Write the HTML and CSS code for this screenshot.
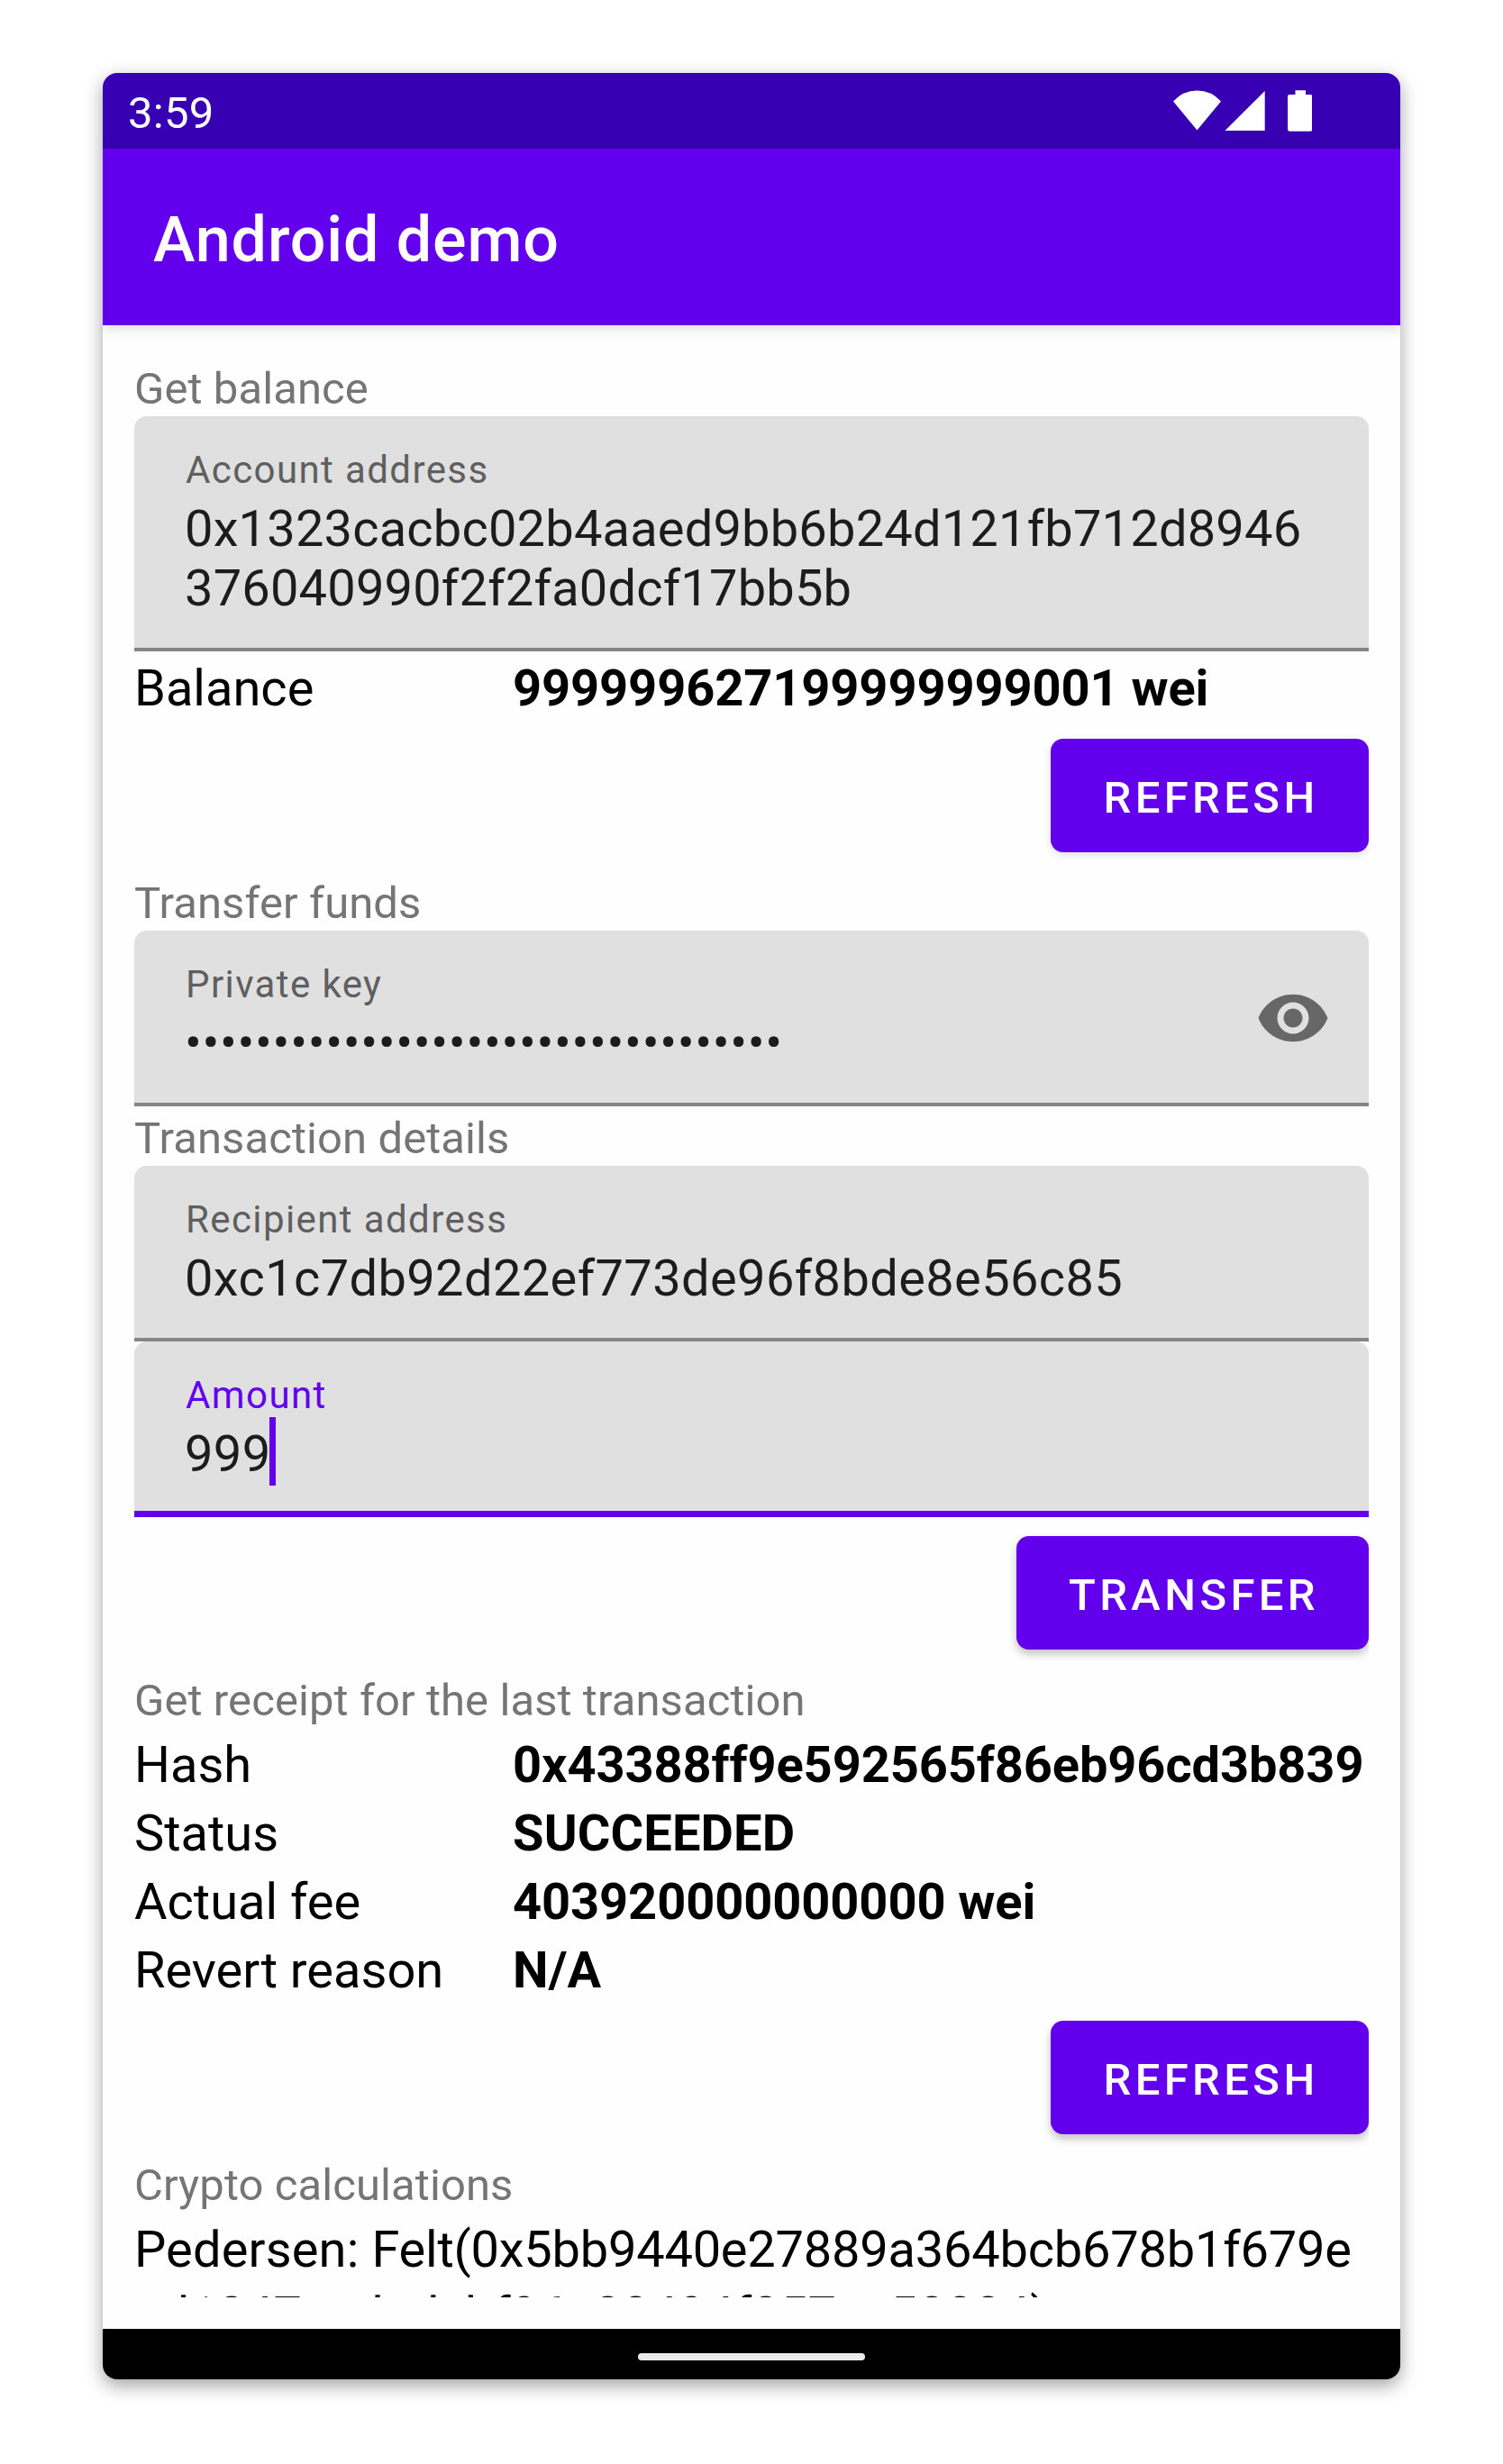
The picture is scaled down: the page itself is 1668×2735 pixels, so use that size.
FILE: index.html
```html
<!DOCTYPE html>
<html lang="en">
<head>
<meta charset="utf-8">
<title>Android demo</title>
<link rel="stylesheet" href="styles.css">
</head>
<body>
<div class="phone">
  <div class="status-bar">
    <span class="clock">3:59</span>
    <svg class="status-icons" width="160" height="50" viewBox="0 0 160 50" fill="#fff">
      <path d="M6 15.5Q17 3.500 32.500 3.500T59 15.500L32.500 47.500Z"/>
      <path d="M63.500 48L107.700 4V48Z"/>
      <path d="M141.500 3.300h11.500v4.700h5.500q1.800 0 1.800 1.800v37q0 2-2 2h-23.200q-2 0-2-2v-37q0-1.800 1.800-1.800h6.600z"/>
    </svg>
  </div>
  <header class="app-bar">Android demo</header>
  <main class="content">
    <h2 class="section">Get balance</h2>
    <div class="field">
      <span class="label">Account address</span>
      <span class="value value-long">0x1323cacbc02b4aaed9bb6b24d121fb712d8946<br>376040990f2f2fa0dcf17bb5b</span>
    </div>
    <div class="row"><span class="key">Balance</span><b>999999627199999999001 wei</b></div>
    <div class="actions actions-top"><button class="button">REFRESH</button></div>

    <h2 class="section">Transfer funds</h2>
    <div class="field field-icon">
      <div>
        <span class="label">Private key</span>
        <span class="value value-secret">••••••••••••••••••••••••••••••••••</span>
      </div>
      <svg class="eye" viewBox="0 0 24 24" fill="#676767"><path d="M12 4.500C7 4.500 2.730 7.610 1 12c1.730 4.390 6 7.500 11 7.500s9.270-3.110 11-7.500c-1.730-4.390-6-7.500-11-7.500zM12 17c-2.760 0-5-2.240-5-5s2.240-5 5-5 5 2.240 5 5-2.240 5-5 5zm0-8c-1.660 0-3 1.340-3 3s1.340 3 3 3 3-1.340 3-3-1.340-3-3-3z"/></svg>
    </div>
    <h2 class="section">Transaction details</h2>
    <div class="field">
      <span class="label">Recipient address</span>
      <span class="value">0xc1c7db92d22ef773de96f8bde8e56c85</span>
    </div>
    <div class="field focused">
      <span class="label">Amount</span>
      <span class="value">999<i class="caret"></i></span>
    </div>
    <div class="actions"><button class="button wide">TRANSFER</button></div>

    <h2 class="section">Get receipt for the last transaction</h2>
    <div class="row"><span class="key">Hash</span><b>0x43388ff9e592565f86eb96cd3b839</b></div>
    <div class="row"><span class="key">Status</span><b class="upper">SUCCEEDED</b></div>
    <div class="row"><span class="key">Actual fee</span><b>403920000000000 wei</b></div>
    <div class="row"><span class="key">Revert reason</span><b class="upper">N/A</b></div>
    <div class="actions"><button class="button">REFRESH</button></div>

    <h2 class="section">Crypto calculations</h2>
    <p class="hash"><span class="hash-label">Pedersen: </span>Felt(0x5bb9440e27889a364bcb678b1f679e<br>ed1247cadadcbf96e28494f857ca50084)</p>
  </main>
  <div class="nav-bar"><span class="pill"></span></div>
</div>
</body>
</html>
```
FILE: styles.css
```css
* { box-sizing: border-box; }
body {
  margin: 0;
  padding: 81px 114px 0;
  height: 2735px;
  background: #fff;
  font-family: Roboto, "Liberation Sans", sans-serif;
  overflow: hidden;
}
.phone {
  display: flex;
  flex-direction: column;
  width: 1440px;
  height: 2560px;
  border-radius: 16px;
  background: #fefefe;
  overflow: hidden;
  box-shadow: 0 7px 20px rgba(0, 0, 0, .37);
}
.status-bar {
  display: flex;
  justify-content: space-between;
  flex: none;
  height: 84px;
  padding: 0 98px 0 28px;
  background: #3700b3;
  color: #fff;
}
.clock { padding-top: 5px; font-size: 49px; line-height: 80px; letter-spacing: .3px; }
.status-icons { margin-top: 16px; }
.app-bar {
  flex: none;
  height: 196px;
  padding: 6px 56px 0;
  background: #6200ee;
  color: #fff;
  font-size: 70px;
  font-weight: 500;
  line-height: 190px;
  letter-spacing: .9px;
  box-shadow: 0 2px 14px rgba(0, 0, 0, .16);
}
.content {
  flex: 1;
  min-height: 0;
  margin: 35px;
  overflow: hidden;
}
.section {
  margin: 0;
  padding-top: 5px;
  height: 66px;
  color: #757575;
  font-size: 49px;
  font-weight: 400;
  line-height: 62px;
  letter-spacing: .08px;
}
.field {
  padding: 35px 56px 33px;
  border-bottom: 4px solid #858585;
  border-radius: 14px 14px 0 0;
  background: #e0e0e0;
}
.field-icon {
  display: flex;
  justify-content: space-between;
  padding-right: 42px;
}
.label {
  display: block;
  margin: 0 0 8px 1px;
  color: #5f5f5f;
  font-size: 42px;
  line-height: 49px;
  letter-spacing: .0333em;
}
.value {
  display: block;
  color: #1c1c1c;
  font-size: 56px;
  line-height: 66px;
  letter-spacing: .37px;
  white-space: nowrap;
}
.value-long { letter-spacing: .18px; }
.value-secret { letter-spacing: .63px; }
.eye { width: 84px; height: 84px; margin-top: 20px; }
.focused { padding-bottom: 30px; border-bottom: 7px solid #6200ee; }
.focused .label { color: #6200ee; }
.focused .value { position: relative; }
.caret {
  position: absolute;
  left: 94px;
  top: -8px;
  width: 7px;
  height: 76px;
  background: #6200ee;
}
.row {
  display: flex;
  height: 76px;
  padding-top: 8px;
  font-size: 56px;
  line-height: 66px;
  white-space: nowrap;
}
.key { flex: none; width: 420px; }
.row b { font-weight: 700; letter-spacing: -.1px; }
.row .upper { letter-spacing: .15px; }
.actions { display: flex; justify-content: flex-end; padding: 21px 0; overflow: hidden; }
.button {
  width: 353px;
  height: 126px;
  padding: 5px 0 0;
  border: 0;
  border-radius: 14px;
  background: #6200ee;
  color: #fff;
  font: 500 49px/121px Roboto, "Liberation Sans", sans-serif;
  letter-spacing: .0893em;
  text-align: center;
  text-indent: 3px;
  box-shadow: 0 5px 10px rgba(0, 0, 0, .24);
}
.actions-top .button { box-shadow: 0 3px 8px rgba(0, 0, 0, .13); }
.wide { width: 391px; }
.hash {
  margin: 0;
  padding-top: 5px;
  font-size: 56px;
  line-height: 73px;
  letter-spacing: -.23px;
  white-space: nowrap;
}
.hash-label { letter-spacing: .15px; }
.nav-bar {
  display: flex;
  justify-content: center;
  flex: none;
  height: 56px;
  padding-top: 27px;
  background: #000;
}
.pill { width: 252px; height: 8px; border-radius: 4px; background: #ebebeb; }
```
